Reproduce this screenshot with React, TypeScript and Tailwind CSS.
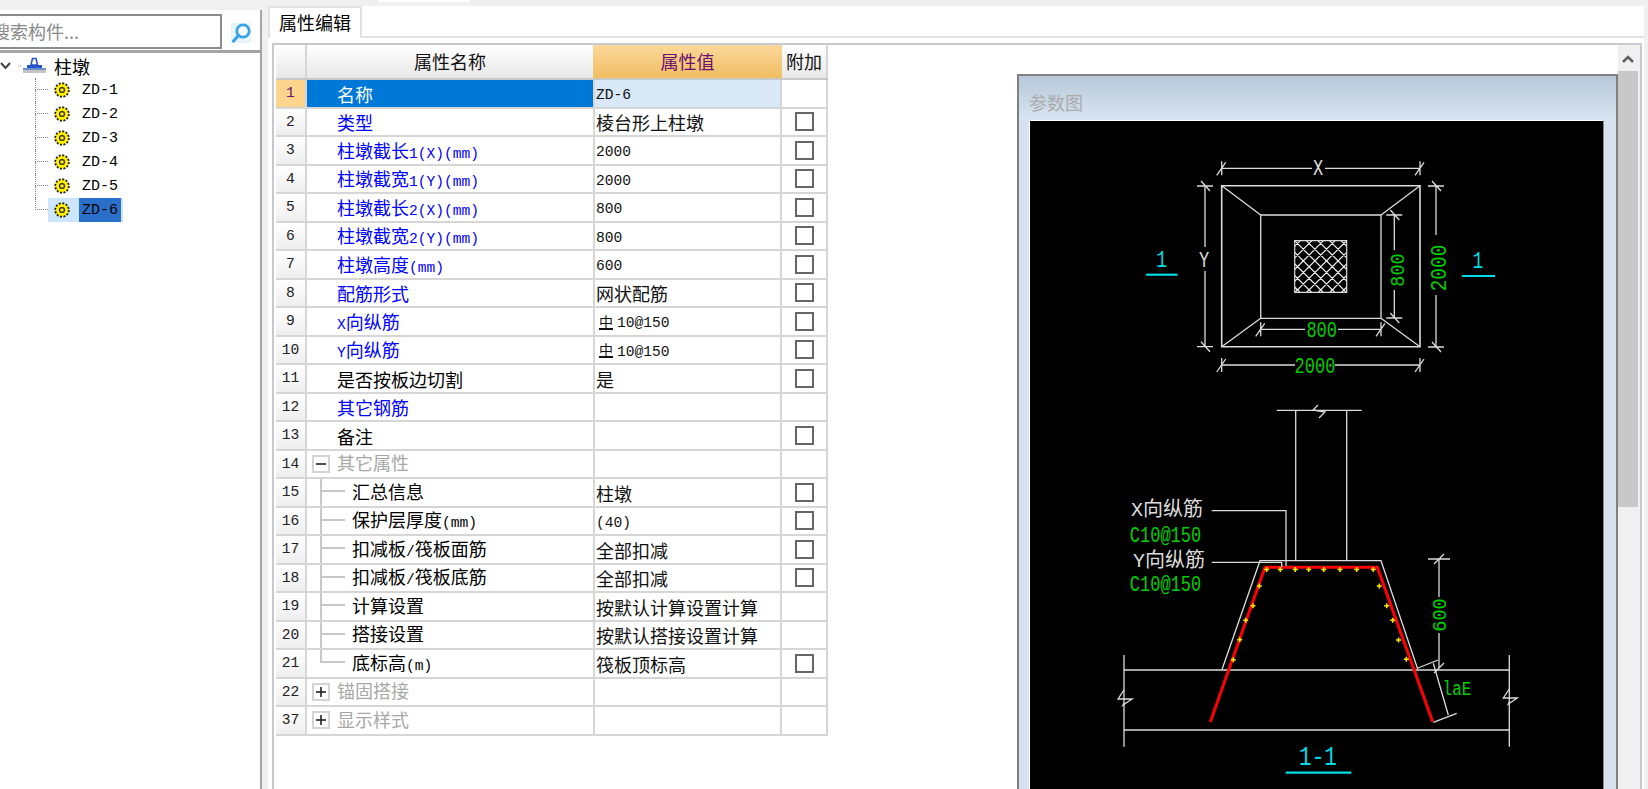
import React from "react";

const CJK = "font-['Noto_Sans_CJK_SC','Liberation_Sans',sans-serif] text-[18px]";
const MONO = "font-['Liberation_Mono',monospace] text-[14.6px]";

function Mixed({ text }: { text: string }) {
  const parts = text.split(/([\x00-\x7f]+)/).filter(Boolean);
  return (
    <span className="inline-block whitespace-nowrap pt-[2px] leading-none">
      {parts.map((p, i) =>
        /^[\x00-\x7f]+$/.test(p) ? (
          <span key={i} className={MONO}>{p}</span>
        ) : (
          <span key={i} className={CJK}>{p}</span>
        )
      )}
    </span>
  );
}

type Row = {
  n: number;
  name: string;
  value?: string;
  cb?: boolean;
  kind: "blue" | "black" | "group" | "child";
  last?: boolean;
  box?: "+" | "-";
  rebar?: boolean;
};

const rows: Row[] = [
  { n: 1, name: "名称", value: "ZD-6", kind: "blue" },
  { n: 2, name: "类型", value: "棱台形上柱墩", cb: true, kind: "blue" },
  { n: 3, name: "柱墩截长1(X)(mm)", value: "2000", cb: true, kind: "blue" },
  { n: 4, name: "柱墩截宽1(Y)(mm)", value: "2000", cb: true, kind: "blue" },
  { n: 5, name: "柱墩截长2(X)(mm)", value: "800", cb: true, kind: "blue" },
  { n: 6, name: "柱墩截宽2(Y)(mm)", value: "800", cb: true, kind: "blue" },
  { n: 7, name: "柱墩高度(mm)", value: "600", cb: true, kind: "blue" },
  { n: 8, name: "配筋形式", value: "网状配筋", cb: true, kind: "blue" },
  { n: 9, name: "X向纵筋", value: "10@150", rebar: true, cb: true, kind: "blue" },
  { n: 10, name: "Y向纵筋", value: "10@150", rebar: true, cb: true, kind: "blue" },
  { n: 11, name: "是否按板边切割", value: "是", cb: true, kind: "black" },
  { n: 12, name: "其它钢筋", kind: "blue" },
  { n: 13, name: "备注", cb: true, kind: "black" },
  { n: 14, name: "其它属性", kind: "group", box: "-" },
  { n: 15, name: "汇总信息", value: "柱墩", cb: true, kind: "child" },
  { n: 16, name: "保护层厚度(mm)", value: "(40)", cb: true, kind: "child" },
  { n: 17, name: "扣减板/筏板面筋", value: "全部扣减", cb: true, kind: "child" },
  { n: 18, name: "扣减板/筏板底筋", value: "全部扣减", cb: true, kind: "child" },
  { n: 19, name: "计算设置", value: "按默认计算设置计算", kind: "child" },
  { n: 20, name: "搭接设置", value: "按默认搭接设置计算", kind: "child" },
  { n: 21, name: "底标高(m)", value: "筏板顶标高", cb: true, kind: "child", last: true },
  { n: 22, name: "锚固搭接", kind: "group", box: "+" },
  { n: 37, name: "显示样式", kind: "group", box: "+" },
];

function Gear() {
  return (
    <svg width="16" height="16" viewBox="0 0 17 17" className="shrink-0">
      <circle cx="8.5" cy="8.5" r="7.2" fill="#ffee00" stroke="#222" strokeWidth="2" strokeDasharray="2.2 1.57" />
      <circle cx="8.5" cy="8.5" r="5.9" fill="#ffee00" />
      <circle cx="8.5" cy="8.5" r="2.6" fill="#ffee00" stroke="#222" strokeWidth="1.3" />
    </svg>
  );
}

function TreeItem({ label, last, selected }: { label: string; last?: boolean; selected?: boolean }) {
  return (
    <div className="flex h-6 items-center pl-[35px]">
      <div className="flex h-full w-[13px] shrink-0 flex-col">
        <div className="h-3 border-b border-l border-dotted border-[#888]" />
        {!last && <div className="h-3 border-l border-dotted border-[#888]" />}
      </div>
      <div className={`flex h-full items-center pr-0.5 ${selected ? "bg-[#cce6ff]" : ""}`}>
        <div className="pl-[6px] pr-[9px]">
          <Gear />
        </div>
        <span
          className={`flex h-full items-center px-[3px] pt-[3px] font-['Liberation_Mono',monospace] text-[15px] text-black ${
            selected ? "bg-[#2a6fc9]" : ""
          }`}
        >
          {label}
        </span>
      </div>
    </div>
  );
}

function Checkbox() {
  return <div className="h-[19px] w-[19px] border-2 border-[#666] bg-white" />;
}

function NameCell({ r }: { r: Row }) {
  if (r.n === 1) {
    return (
      <div className="flex h-full items-center bg-[#0078d7] pl-[30px] text-white">
        <Mixed text={r.name} />
      </div>
    );
  }
  if (r.kind === "child") {
    return (
      <div className="flex h-full items-center text-black">
        <div className="ml-[13px] flex h-full w-[25px] shrink-0 flex-col">
          <div className="h-1/2 border-b-2 border-l-2 border-[#c8c8c8]" />
          {!r.last && <div className="h-1/2 border-l-2 border-[#c8c8c8]" />}
        </div>
        <div className="pl-[7px]">
          <Mixed text={r.name} />
        </div>
      </div>
    );
  }
  if (r.kind === "group") {
    return (
      <div className="flex h-full items-center pl-[5px] text-[#a8a8a8]">
        <div className="flex h-[18px] w-[18px] items-center justify-center border-2 border-[#d4d4d4] bg-white">
          <svg width="12" height="12" viewBox="0 0 12 12">
            <path d="M1 6H11" stroke="#222" strokeWidth="1.6" />
            {r.box === "+" && <path d="M6 1V11" stroke="#222" strokeWidth="1.6" />}
          </svg>
        </div>
        <div className="pl-[7px]">
          <Mixed text={r.name} />
        </div>
      </div>
    );
  }
  return (
    <div className={`flex h-full items-center pl-[30px] ${r.kind === "blue" ? "text-[#0000ff]" : "text-black"}`}>
      <Mixed text={r.name} />
    </div>
  );
}

function TableRow({ r }: { r: Row }) {
  const active = r.n === 1;
  return (
    <div className="grid h-[28.5px] grid-cols-[31px_286px_189px_46px] border-b-2 border-[#d6d6d6]">
      <div
        className={`flex items-center justify-center border-r-2 border-[#d6d6d6] pt-0.5 ${MONO} ${
          active ? "bg-[#fdd48c] text-[#6a1070]" : "bg-gradient-to-b from-white to-[#eeeeee] text-[#222]"
        }`}
      >
        {r.n}
      </div>
      <NameCell r={r} />
      <div
        className={`flex items-center border-l-2 border-r-2 border-[#d6d6d6] pl-px text-[#111] ${
          active ? "bg-[#d8e8f6]" : "bg-white"
        }`}
      >
        {r.rebar && (
          <span className="ml-[3px] mr-[4px] mt-0.5 border-b-2 border-[#111] font-['Noto_Sans_CJK_SC',sans-serif] text-[14px] leading-[13px]">
            中
          </span>
        )}
        {r.value && <Mixed text={r.value} />}
      </div>
      <div className="flex items-center justify-center border-r-2 border-[#d6d6d6]">{r.cb && <Checkbox />}</div>
    </div>
  );
}

const WHITE = "#dcdcdc";
const GREEN = "#00d000";
const CYAN = "#00dce6";

function L({ d, w = 1.3, c = WHITE }: { d: string; w?: number; c?: string }) {
  return <path d={d} stroke={c} strokeWidth={w} fill="none" />;
}

function CadText({
  x,
  y,
  t,
  c,
  size = 17,
  rot = 0,
  sy = 1.3,
}: {
  x: number;
  y: number;
  t: string;
  c: string;
  size?: number;
  rot?: number;
  sy?: number;
}) {
  return (
    <text
      transform={`translate(${x} ${y}) rotate(${rot}) scale(1 ${sy})`}
      y={1.5}
      textAnchor="middle"
      dominantBaseline="central"
      fill={c}
      fontSize={size}
      fontFamily="'Liberation Mono','Noto Sans CJK SC',monospace"
    >
      {t}
    </text>
  );
}

function HTick({ x, y }: { x: number; y: number }) {
  return <L d={`M${x} ${y - 7}V${y + 7}M${x - 5} ${y + 7}L${x + 4} ${y - 6}`} />;
}
function VTick({ x, y, l = 8 }: { x: number; y: number; l?: number }) {
  return <L d={`M${x - l} ${y}H${x + l}M${x - 4} ${y - 5}L${x + 5} ${y + 5}`} />;
}
function BreakV({ x, y }: { x: number; y: number }) {
  return <L d={`M${x} ${y - 10}L${x - 6} ${y - 1}H${x + 8}L${x - 1} ${y + 5}L${x} ${y + 3}`} />;
}

function Cad() {
  const lattice: string[] = [];
  for (let i = -5; i <= 5; i++) {
    const o = i * 11.6;
    lattice.push(`M${1294.7 + o} 240.7l52 52`);
    lattice.push(`M${1346.7 + o} 240.7l-52 52`);
  }
  const dots: [number, number][] = [
    [1266.7, 569.5], [1280.3, 569.5], [1295.3, 569.5], [1308.7, 569.5], [1323.7, 569.5], [1340, 569.5], [1356.7, 569.5], [1373.3, 569.5],
    [1259.3, 586], [1253, 605.7], [1245.7, 620.3], [1239.7, 639.7], [1233.3, 659.7],
    [1379.3, 586], [1386.7, 605.7], [1392.7, 620.3], [1398.5, 640], [1406.3, 659.3],
  ];
  return (
    <svg viewBox="1030 121 573 668" width="573" height="668" className="block">
      <defs>
        <clipPath id="sq">
          <rect x="1294.7" y="240.7" width="52" height="51.6" />
        </clipPath>
      </defs>
      {/* plan */}
      <L d="M1221.7 185.7H1420V346.7H1221.7Z" w={1.6} />
      <L d="M1260.7 215H1381V318.3H1260.7Z" />
      <L d="M1221.7 185.7L1260.7 215M1420 185.7L1381 215M1221.7 346.7L1260.7 318.3M1420 346.7L1381 318.3" />
      <g clipPath="url(#sq)">
        <L d={lattice.join("")} w={1.2} c="#f0f0f0" />
      </g>
      <L d="M1294.7 240.7H1346.7V292.3H1294.7Z" w={1.2} />
      {/* dims */}
      <L d="M1221.7 168.3H1312M1325 168.3H1420" />
      <HTick x={1221.7} y={168.3} />
      <HTick x={1420} y={168.3} />
      <CadText x={1318} y={167.5} t="X" c={WHITE} size={17} />
      <L d="M1205 186V247M1205 271V346.7" />
      <VTick x={1205} y={186} />
      <VTick x={1205} y={346.7} />
      <CadText x={1204} y={259} t="Y" c={WHITE} size={17} />
      <L d="M1436 186V235M1436 295V347" />
      <VTick x={1436} y={186} />
      <VTick x={1436} y={347} />
      <CadText x={1439} y={268} t="2000" c={GREEN} rot={-90} size={19.4} sy={1.1} />
      <L d="M1394.3 215V250M1394.3 290V318" />
      <VTick x={1394.3} y={215} />
      <VTick x={1394.3} y={318} />
      <CadText x={1397} y={270} t="800" c={GREEN} rot={-90} size={18.5} sy={1.1} />
      <L d="M1260.7 329.3H1305M1338 329.3H1381" />
      <HTick x={1260.7} y={329.3} />
      <HTick x={1381} y={329.3} />
      <CadText x={1321.7} y={329} t="800" c={GREEN} />
      <L d="M1221.7 365H1295M1335 365H1420" />
      <HTick x={1221.7} y={365} />
      <HTick x={1420} y={365} />
      <CadText x={1315} y={365} t="2000" c={GREEN} />
      <CadText x={1161.7} y={259} t="1" c={CYAN} size={18} />
      <L d="M1146 274.7H1177.5" w={2.2} c={CYAN} />
      <CadText x={1478} y={260} t="1" c={CYAN} size={18} />
      <L d="M1462 276H1495" w={2.2} c={CYAN} />
      {/* section */}
      <L d="M1276.7 410.3H1361.7M1295.7 410.3V560.7M1346.7 410.3V560.7" />
      <L d="M1318 405L1313 410L1325 412L1319 418" />
      <L d="M1222 669.5L1260 560.7H1381L1417.7 669" />
      <L d="M1124 670H1509.3M1124 730H1509.3M1124 655V746.7M1509.3 655V746.7" />
      <BreakV x={1124} y={700} />
      <BreakV x={1509.3} y={699} />
      <path d="M1210.3 722L1265 567.3H1377.3L1432.7 721.7" stroke="#ff0000" strokeWidth="3" fill="none" />
      {dots.map(([x, y], i) => (
        <path key={i} d={`M${x - 2.5} ${y}H${x + 2.5}M${x} ${y - 2.5}V${y + 2.5}`} stroke="#ffe600" strokeWidth="1.6" />
      ))}
      <L d="M1211.7 510.7H1286V566" />
      <L d="M1211.7 562.3H1281.7V567" />
      <CadText x={1167} y={509} t="X向纵筋" c={WHITE} size={20} sy={1} />
      <CadText x={1165.5} y={535} t="C10@150" c={GREEN} size={17} sy={1.25} />
      <CadText x={1169} y={560} t="Y向纵筋" c={WHITE} size={20} sy={1} />
      <CadText x={1165.5} y={584} t="C10@150" c={GREEN} size={17} sy={1.25} />
      {/* 600 */}
      <L d="M1439 559V597M1439 633V668" />
      <L d="M1428 559H1450M1434 564L1444 554M1434 673L1444 663" />
      <CadText x={1439} y={615} t="600" c={GREEN} rot={-90} size={18.5} sy={1.1} />
      {/* laE */}
      <L d="M1433.3 663.3L1448.3 715M1418 668L1438 660M1433.3 722.3L1456.7 713.3" />
      <CadText x={1457} y={688} t="laE" c={GREEN} size={16} />
      <CadText x={1318} y={756} t="1-1" c={CYAN} size={21} />
      <L d="M1285.7 772.7H1351.3" w={2.2} c={CYAN} />
    </svg>
  );
}

export default function App() {
  return (
    <div className="flex h-[789px] w-[1648px] flex-col overflow-hidden bg-[#f0f0f0]">
      <div className="h-[6px] shrink-0 pl-[378px]">
        <div className="h-[2px] w-[92px] bg-white" />
      </div>

      <div className="flex min-h-0 flex-1">
        {/* left panel */}
        <aside className="mt-1 flex w-[262px] shrink-0 flex-col border-r-2 border-[#a4a4a4] bg-white">
          <div className="flex h-[40px] shrink-0 items-end">
            <div className="mb-px flex h-[35px] w-[222px] shrink-0 items-center overflow-hidden border-2 border-l-0 border-[#8c8c8c]">
              <span className={`${CJK} -ml-[8px] whitespace-nowrap text-[#8a8a8a]`}>搜索构件...</span>
            </div>
            <div className="flex h-[35px] flex-1 items-center justify-center">
              <svg width="24" height="24" viewBox="0 0 24 24">
                <rect x="2" y="2" width="20" height="20" fill="#e6f4fd" />
                <circle cx="14" cy="10" r="6.2" fill="#f4fbff" stroke="#3aa2e6" strokeWidth="2.8" />
                <path d="M9.5 14.5L4.5 20" stroke="#3aa2e6" strokeWidth="3.2" strokeLinecap="round" />
              </svg>
            </div>
          </div>
          <div className="flex-1 border-t-[3px] border-[#a4a4a4] pt-px">
            <div className="flex h-6 items-center">
              <svg width="22" height="24" viewBox="0 0 22 24" className="shrink-0">
                <path d="M1 9L5.5 14L10 9" stroke="#444" strokeWidth="2" fill="none" />
                <path d="M18 12H22" stroke="#999" strokeWidth="1" strokeDasharray="1 1" />
              </svg>
              <svg width="26" height="24" viewBox="0 0 26 24" className="shrink-0">
                <path d="M9 11L10.5 4.5H14L15.5 11Z" fill="#fff" stroke="#2a55c8" strokeWidth="1.6" />
                <rect x="5" y="11" width="15" height="3" fill="#2a55c8" />
                <rect x="1" y="14" width="23" height="2" fill="#6a8fd0" />
                <rect x="1" y="16" width="23" height="3" fill="#c4c4c4" />
              </svg>
              <span className={`${CJK} pl-[6px] text-black`}>柱墩</span>
            </div>
            <TreeItem label="ZD-1" />
            <TreeItem label="ZD-2" />
            <TreeItem label="ZD-3" />
            <TreeItem label="ZD-4" />
            <TreeItem label="ZD-5" />
            <TreeItem label="ZD-6" last selected />
          </div>
        </aside>

        <div className="w-[6px] shrink-0" />

        {/* right panel */}
        <main className="mr-1 flex min-w-0 flex-1 flex-col bg-white">
          <div className="flex h-[32px] shrink-0 border-b-2 border-[#e2e2e2]">
            <div className={`${CJK} -mb-[2px] flex w-[94px] items-center justify-center border-x-2 border-t-2 border-[#e2e2e2] bg-white pb-0.5 text-black`}>
              属性编辑
            </div>
          </div>
          <div className="flex min-h-0 flex-1 flex-col pl-1 pr-0.5 pt-[5px]">
            <div className="flex min-h-0 flex-1 border-2 border-b-0 border-[#c8c8d0]">
              {/* table */}
              <div className="ml-0.5 w-[552px] shrink-0">
                <div className="grid h-[35px] grid-cols-[31px_286px_189px_46px] border-b-2 border-[#c8c8c8]">
                  <div className="border-r-2 border-[#d6d6d6] bg-gradient-to-b from-white to-[#e8e8e8]" />
                  <div className={`${CJK} flex items-center justify-center bg-gradient-to-b from-white to-[#e8e8e8] text-[#111]`}>属性名称</div>
                  <div className={`${CJK} flex items-center justify-center bg-gradient-to-b from-[#fbd89a] to-[#f0bd60] text-[#6a1070]`}>属性值</div>
                  <div className={`${CJK} flex items-center justify-center border-r-2 border-[#d6d6d6] bg-gradient-to-b from-white to-[#e8e8e8] text-[#111]`}>附加</div>
                </div>
                {rows.map((r) => (
                  <TableRow key={r.n} r={r} />
                ))}
              </div>

              {/* parameter pane */}
              <div className="min-w-0 flex-1 overflow-hidden pl-[189px] pt-[29px]">
                <div className="border-2 border-b-0 border-[#808080] bg-[#d6e2f0]">
                  <div className="flex h-[44px] items-end bg-gradient-to-b from-[#b8c8d8] to-[#d8e5f2] pb-[4px] pl-[10px]">
                    <span className={`${CJK} text-[#ababab]`}>参数图</span>
                  </div>
                  <div className="ml-[10px] mr-3 border-l border-r border-t border-l-white border-r-[#888] border-t-white bg-black">
                    <Cad />
                  </div>
                </div>
              </div>

              {/* scrollbar */}
              <div className="flex w-[22px] shrink-0 flex-col bg-[#f0f0f0]">
                <div className="flex h-[25px] items-center justify-center pr-0.5 pt-[3px]">
                  <svg width="14" height="10" viewBox="0 0 14 10">
                    <path d="M2 8L7 3L12 8" stroke="#606060" strokeWidth="2.6" fill="none" />
                  </svg>
                </div>
                <div className="mt-px h-[436px] w-5 bg-[#c8c8c8]" />
              </div>
            </div>
          </div>
        </main>
      </div>
    </div>
  );
}
